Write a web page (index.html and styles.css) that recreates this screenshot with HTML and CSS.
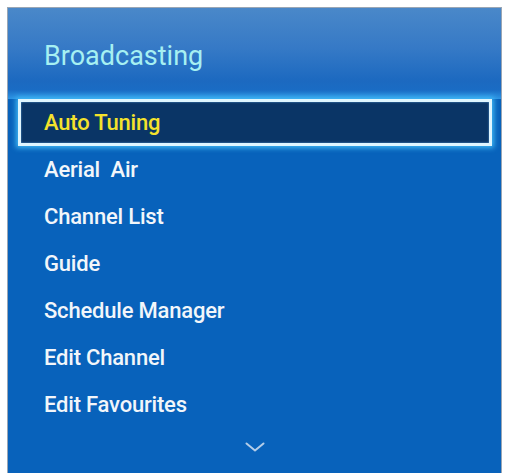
FILE: index.html
```html
<!DOCTYPE html>
<html>
<head>
<meta charset="utf-8">
<link rel="stylesheet" href="styles.css">
</head>
<body>
<div class="panel">
  <div class="header">Broadcasting</div>
  <ul class="menu">
    <li class="item selected">Auto Tuning</li>
    <li class="item">Aerial&nbsp;&nbsp;Air</li>
    <li class="item">Channel List</li>
    <li class="item">Guide</li>
    <li class="item">Schedule Manager</li>
    <li class="item">Edit Channel</li>
    <li class="item">Edit Favourites</li>
  </ul>
  <div class="more">
    <svg width="20" height="10" viewBox="0 0 20 10"><path d="M1.5 1.5 L10 8.5 L18.5 1.5" fill="none" stroke="#b4cde8" stroke-width="2" stroke-linecap="round" stroke-linejoin="round"/></svg>
  </div>
</div>
</body>
</html>
```
FILE: styles.css
```css
html, body {
  margin: 0;
  padding: 0;
  background: #ffffff;
}
body {
  font-family: Roboto, "Liberation Sans", sans-serif;
  overflow: hidden;
  height: 473px;
}
.panel {
  margin: 7px 5px 0 7px;
  width: 493px;
  height: 480px;
  border: 1px solid #9aa6b4;
  border-bottom: none;
  background: #0862bb;
  box-sizing: content-box;
}
.header {
  height: 91px;
  box-sizing: border-box;
  padding: 32px 0 0 36px;
  font-size: 27px;
  line-height: 32px;
  color: #a6f0f2;
  background: linear-gradient(to bottom, #4a88c9 0%, #3579c6 45%, #1c69c0 80%, #1a6cc4 90%, #2e96e6 100%);
}
.menu {
  list-style: none;
  margin: 0;
  padding: 0;
}
.item {
  height: 47px;
  line-height: 47px;
  margin: 0 9px 0 10px;
  padding-left: 26px;
  font-size: 22px;
  font-weight: 500;
  letter-spacing: -0.2px;
  color: #f2f6fa;
  box-sizing: border-box;
}
.item.selected {
  border: 3px solid #dff6ff;
  padding-left: 23px;
  line-height: 41px;
  background: #0a3566;
  color: #f4e22c;
  box-shadow: 0 0 5px 2px #3fb8f4, inset 0 0 2px #5fa0d8;
}
.more {
  height: 26px;
  display: flex;
  align-items: center;
  justify-content: center;
  padding-top: 6px;
}
.more svg {
  display: block;
}
```
